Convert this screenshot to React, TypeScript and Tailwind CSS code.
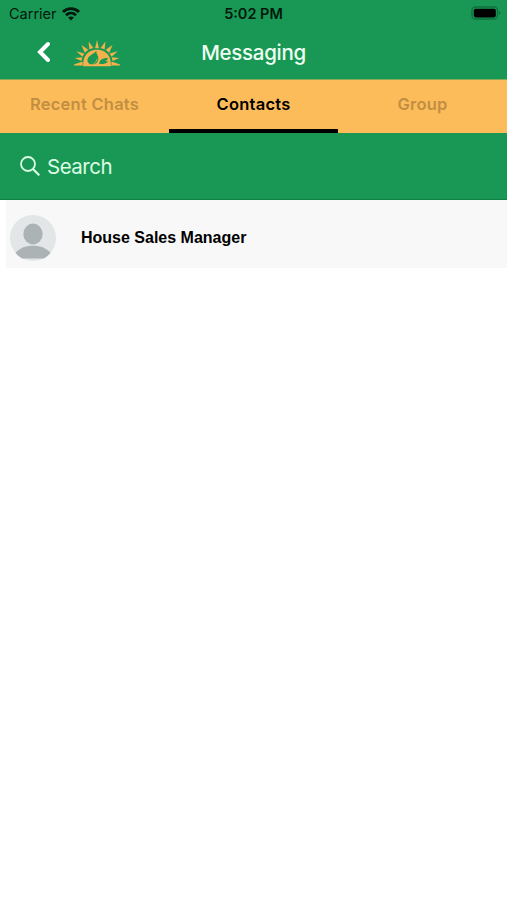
import React from 'react';

interface Tab {
    label: string;
    active: boolean;
}

interface Contact {
    id: number;
    name: string;
}

const tabs: Tab[] = [
    { label: 'Recent Chats', active: false },
    { label: 'Contacts', active: true },
    { label: 'Group', active: false },
];

const contacts: Contact[] = [{ id: 1, name: 'House Sales Manager' }];

const WifiIcon: React.FC = () => (
    <svg width="18" height="14" viewBox="0 0 18 14" fill="none" stroke="#03170c" strokeWidth="2.8">
        <path d="M1 4.9C5.6 .4 12.4 .4 17 4.9" />
        <path d="M4 8.2c2.9-2.7 7.1-2.7 10 0" />
        <path d="M9 13.6 6.1 10.6c1.7-1.5 4.1-1.5 5.8 0Z" fill="#03170c" stroke="none" />
    </svg>
);

const BatteryIcon: React.FC = () => (
    <svg width="30" height="14" viewBox="0 0 30 14">
        <rect x="1" y="1" width="25.5" height="12" rx="3.5" fill="none" stroke="#0f6f3d" strokeWidth="1.3" />
        <rect x="2.8" y="2.8" width="22" height="8.6" rx="1.8" fill="#000" />
        <path d="M28 5v4c1.8-.7 1.8-3.3 0-4Z" fill="#0f6f3d" />
    </svg>
);

const SunLogo: React.FC = () => (
    <svg width="46" height="27" viewBox="0 0 48 28">
        <g fill="#f2b14b">
            <path d="M22 8.5 24 0l2 8.5Z" />
            <path d="m16 9.6-.8-8.1 5 6.7Z" />
            <path d="m32 9.6.8-8.1-5 6.7Z" />
            <path d="m11.2 13.2-3.4-8 7.1 5Z" />
            <path d="m36.8 13.2 3.4-8-7.1 5Z" />
            <path d="m8.8 17.5-6.4-5.8 8.4 2.2Z" />
            <path d="m39.2 17.5 6.4-5.8-8.4 2.2Z" />
            <path d="m7.8 21.8-7-3.2 7.8-.8Z" />
            <path d="m40.2 21.8 7-3.2-7.8-.8Z" />
            <path d="M7.4 22.8 0 25.6v1h48v-1l-7.4-2.8Z" />
            <path d="M9.6 27.3C8.3 17 14.6 9.8 24 9.8S39.7 17 38.4 27.3Z" />
        </g>
        <path d="M9.3 26C8.3 16.6 14.6 9.6 24 9.6S39.7 16.6 38.7 26" fill="none" stroke="#189854" strokeWidth=".6" />
        <g fill="#189854">
            <path d="M23.2 11.2c-1 2.8-7.4 4.4-8.8 8-1.2 3.2.8 5.8 3.8 6.4 4.4 0 7.4-2.6 7.2-6.4 0-3.2-2-4-2.2-8Z" />
            <path d="M26.4 25c-.2-3.6 2.2-6.4 9-6.4-.6 2-1.6 2.8-2.8 3.2l3.2.7c-2.2 1.8-5.4 2.9-9.4 2.5Z" />
        </g>
        <path d="M15.5 26.6c5-.6 7.6-3.2 8.6-7" fill="none" stroke="#f2b14b" strokeWidth=".8" />
    </svg>
);

const Avatar: React.FC = () => (
    <svg width="46" height="46" viewBox="0 0 46 46">
        <circle cx="23" cy="23" r="23" fill="#e2e6e7" />
        <g fill="#abb3b5">
            <ellipse cx="23" cy="19" rx="9.7" ry="10.4" />
            <path d="M5.6 38C9 33.2 15.5 30.7 23 30.7S37 33.2 40.4 38a23 23 0 0 1-6.4 5.5H12A23 23 0 0 1 5.6 38Z" />
        </g>
    </svg>
);

const StatusBar: React.FC = () => (
    <div className="grid h-7 grid-cols-3 items-center text-[#03170c]">
        <div className="flex items-center gap-[5px] pl-[9px]">
            <span className="text-[14.5px] leading-7">Carrier</span>
            <WifiIcon />
        </div>
        <span className="text-center text-[14.5px] leading-7 font-semibold">5:02 PM</span>
        <div className="flex justify-end pr-1.5 pb-0.5">
            <BatteryIcon />
        </div>
    </div>
);

const Header: React.FC = () => (
    <div className="grid h-[51px] grid-cols-3 items-center">
        <div className="flex items-center gap-[23px] pl-9">
            <svg
                width="15"
                height="22"
                viewBox="0 0 15 22"
                fill="none"
                stroke="#fff"
                strokeWidth="4"
                strokeLinecap="round"
                className="mb-[3px]"
            >
                <path d="M12 3 4 11l8 8" />
            </svg>
            <SunLogo />
        </div>
        <h1 className="text-center text-[20.5px] font-medium tracking-[-0.3px] text-[#effff2]">Messaging</h1>
    </div>
);

const App: React.FC = () => {
    return (
        <div className="h-[900px] w-full overflow-hidden bg-white font-['Inter',sans-serif]">
            <header className="bg-[#189854]">
                <StatusBar />
                <Header />
            </header>
            <nav className="grid h-[54px] grid-cols-3 border-t border-[#8aab55] bg-[#fdbc5a]">
                {tabs.map((tab) => (
                    <div
                        key={tab.label}
                        className={
                            tab.active
                                ? 'border-b-4 border-black text-center text-[16.5px] leading-[49px] font-semibold tracking-[0.25px] text-black'
                                : 'text-center text-[16.5px] leading-[49px] font-semibold tracking-[0.25px] text-[#c18e43]'
                        }
                    >
                        {tab.label}
                    </div>
                ))}
            </nav>
            <div className="flex h-[67px] items-center gap-[7px] border-b border-[#128044] bg-[#189854] pl-5 text-[#dcfbe4]">
                <svg width="20" height="20" viewBox="0 0 20 20" fill="none" stroke="currentColor" strokeWidth="1.8">
                    <circle cx="8" cy="8" r="7" />
                    <path d="m13 13 6.3 6.3" strokeWidth="2.2" />
                </svg>
                <span className="pt-0.5 text-[20.5px] tracking-[-0.5px]">Search</span>
            </div>
            <ul>
                {contacts.map((contact) => (
                    <li key={contact.id} className="ml-1.5 flex h-[68px] items-center gap-[25px] bg-[#f8f8f8] pt-2 pl-1">
                        <Avatar />
                        <span className="font-['Liberation_Sans',sans-serif] text-[16px] font-bold text-black">
                            {contact.name}
                        </span>
                    </li>
                ))}
            </ul>
        </div>
    );
};

export default App;
